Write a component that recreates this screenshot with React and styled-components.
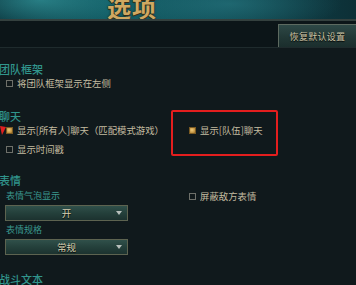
import styled, { createGlobalStyle } from "styled-components";

const Global = createGlobalStyle`
  html, body {
    margin: 0;
    padding: 0;
    background: #10191c;
  }
  body {
    font-family: "Noto Sans CJK SC", "Noto Sans", sans-serif;
    width: 356px;
    height: 285px;
    overflow: hidden;
  }
`;

const Page = styled.div`
  width: 356px;
  height: 285px;
  overflow: hidden;
  background: #10191c;
`;

const Banner = styled.div`
  height: 19px;
  display: flex;
  align-items: flex-end;
  padding-left: 107px;
  overflow: hidden;
  background:
    radial-gradient(ellipse 120px 40px at 40px 0px, rgba(60, 170, 175, 0.55), transparent 70%),
    radial-gradient(ellipse 160px 40px at 230px 4px, rgba(50, 140, 150, 0.45), transparent 70%),
    linear-gradient(90deg, #0c3a42 0%, #146068 30%, #0f4c55 60%, #0d2f36 100%);
  border-bottom: 2px solid #34403e;
`;

const Title = styled.h1`
  margin: 0;
  font-size: 24px;
  line-height: 24px;
  font-weight: 700;
  letter-spacing: 1px;
  color: #cfa862;
  text-shadow: 0 1px 0 #3a2a10, 0 0 2px #1a1406;
`;

const Toolbar = styled.div`
  height: 26px;
  display: flex;
  justify-content: flex-end;
  align-items: flex-end;
  background: #0c1518;
  border-bottom: 1px solid #1f2b2d;
`;

const ResetButton = styled.button`
  width: 78px;
  height: 23px;
  margin: 0;
  padding: 0;
  border: 1px solid #5d6a60;
  border-right: none;
  border-bottom: none;
  background: linear-gradient(180deg, #2e4846 0%, #223836 55%, #1b2e2d 100%);
  color: #cec4a4;
  font-family: inherit;
  font-size: 9px;
  letter-spacing: 0.3px;
  text-shadow: 0 1px 1px #000;
`;

const Content = styled.div`
  display: flex;
  flex-direction: column;
  padding-top: 14px;
`;

const Section = styled.section`
  display: flex;
  flex-direction: column;
  margin-top: ${(p) => p.$gap || 0}px;
`;

const Heading = styled.h2`
  margin: 0 0 0 -1px;
  font-size: 11px;
  line-height: 14px;
  height: 14px;
  font-weight: 500;
  color: #31958c;
`;

const TwoCols = styled.div`
  display: grid;
  grid-template-columns: 171px 1fr;
`;

const Column = styled.div`
  display: flex;
  flex-direction: column;
  gap: ${(p) => p.$gap || 0}px;
  padding-left: ${(p) => p.$indent || 0}px;
`;

const Row = styled.label`
  position: relative;
  display: flex;
  align-items: center;
  gap: 4px;
  height: 14px;
  padding-left: ${(p) => p.$indent ?? 6}px;
  margin-top: ${(p) => p.$top || 0}px;
  font-size: 9.4px;
  color: #c4bca0;
  white-space: nowrap;
`;

const Box = styled.span`
  flex: none;
  width: 5px;
  height: 5px;
  border: 1px solid ${(p) => (p.$on ? "#7a5a22" : "#6e706a")};
  background: ${(p) =>
    p.$on
      ? "radial-gradient(circle at 40% 40%, #f0cc7c, #c0903e 70%, #8a6424)"
      : "#11191b"};
`;

const RedFrame = styled.span`
  position: absolute;
  left: -18px;
  top: -13px;
  width: 103px;
  height: 42px;
  border: 2px solid #e41e1e;
  border-radius: 2px;
  pointer-events: none;
`;

const Pointer = styled.svg`
  position: absolute;
  left: 0;
  top: 3px;
`;

const SubLabel = styled.div`
  height: 12px;
  line-height: 12px;
  padding-left: 6px;
  font-size: 9px;
  color: #3a988f;
  margin-top: ${(p) => p.$gap || 0}px;
`;

const Select = styled.div`
  position: relative;
  margin: 3px 0 0 5px;
  width: 121px;
  height: 14px;
  display: flex;
  align-items: center;
  justify-content: center;
  border: 1px solid #5d6350;
  background: linear-gradient(180deg, #30504a 0%, #24403b 50%, #1c322f 100%);
  color: #d8d0b2;
  font-size: 9.5px;
  text-shadow: 0 1px 1px #000;
`;

const Caret = styled.span`
  position: absolute;
  right: 5px;
  top: 5px;
  width: 0;
  height: 0;
  border-left: 3px solid transparent;
  border-right: 3px solid transparent;
  border-top: 4px solid #b8c0bc;
`;

const Checkbox = ({ on, children, indent, top, marked }) => (
  <Row $indent={indent} $top={top}>
    {marked && (
      <Pointer width="6" height="9" viewBox="0 0 6 9">
        <polygon points="0,0 6,1 2,9" fill="#e02020" />
      </Pointer>
    )}
    <Box $on={on} />
    {children}
  </Row>
);

export default function App() {
  return (
    <Page>
      <Global />
      <Banner>
        <Title>选项</Title>
      </Banner>
      <Toolbar>
        <ResetButton>恢复默认设置</ResetButton>
      </Toolbar>
      <Content>
        <Section>
          <Heading>团队框架</Heading>
          <Checkbox>将团队框架显示在左侧</Checkbox>
        </Section>

        <Section $gap={19}>
          <Heading>聊天</Heading>
          <TwoCols>
            <Column $gap={5}>
              <Checkbox on marked>
                显示[所有人]聊天（匹配模式游戏）
              </Checkbox>
              <Checkbox>显示时间戳</Checkbox>
            </Column>
            <Column $indent={18}>
              <Row $indent={0}>
                <RedFrame />
                <Box $on />
                显示[队伍]聊天
              </Row>
            </Column>
          </TwoCols>
        </Section>

        <Section $gap={17}>
          <Heading>表情</Heading>
          <TwoCols>
            <Column>
              <SubLabel $gap={3}>表情气泡显示</SubLabel>
              <Select>
                开<Caret />
              </Select>
              <SubLabel $gap={3}>表情规格</SubLabel>
              <Select>
                常规<Caret />
              </Select>
            </Column>
            <Column $indent={18}>
              <Checkbox indent={0} top={2}>
                屏蔽敌方表情
              </Checkbox>
            </Column>
          </TwoCols>
        </Section>

        <Section $gap={17}>
          <Heading>战斗文本</Heading>
        </Section>
      </Content>
    </Page>
  );
}
